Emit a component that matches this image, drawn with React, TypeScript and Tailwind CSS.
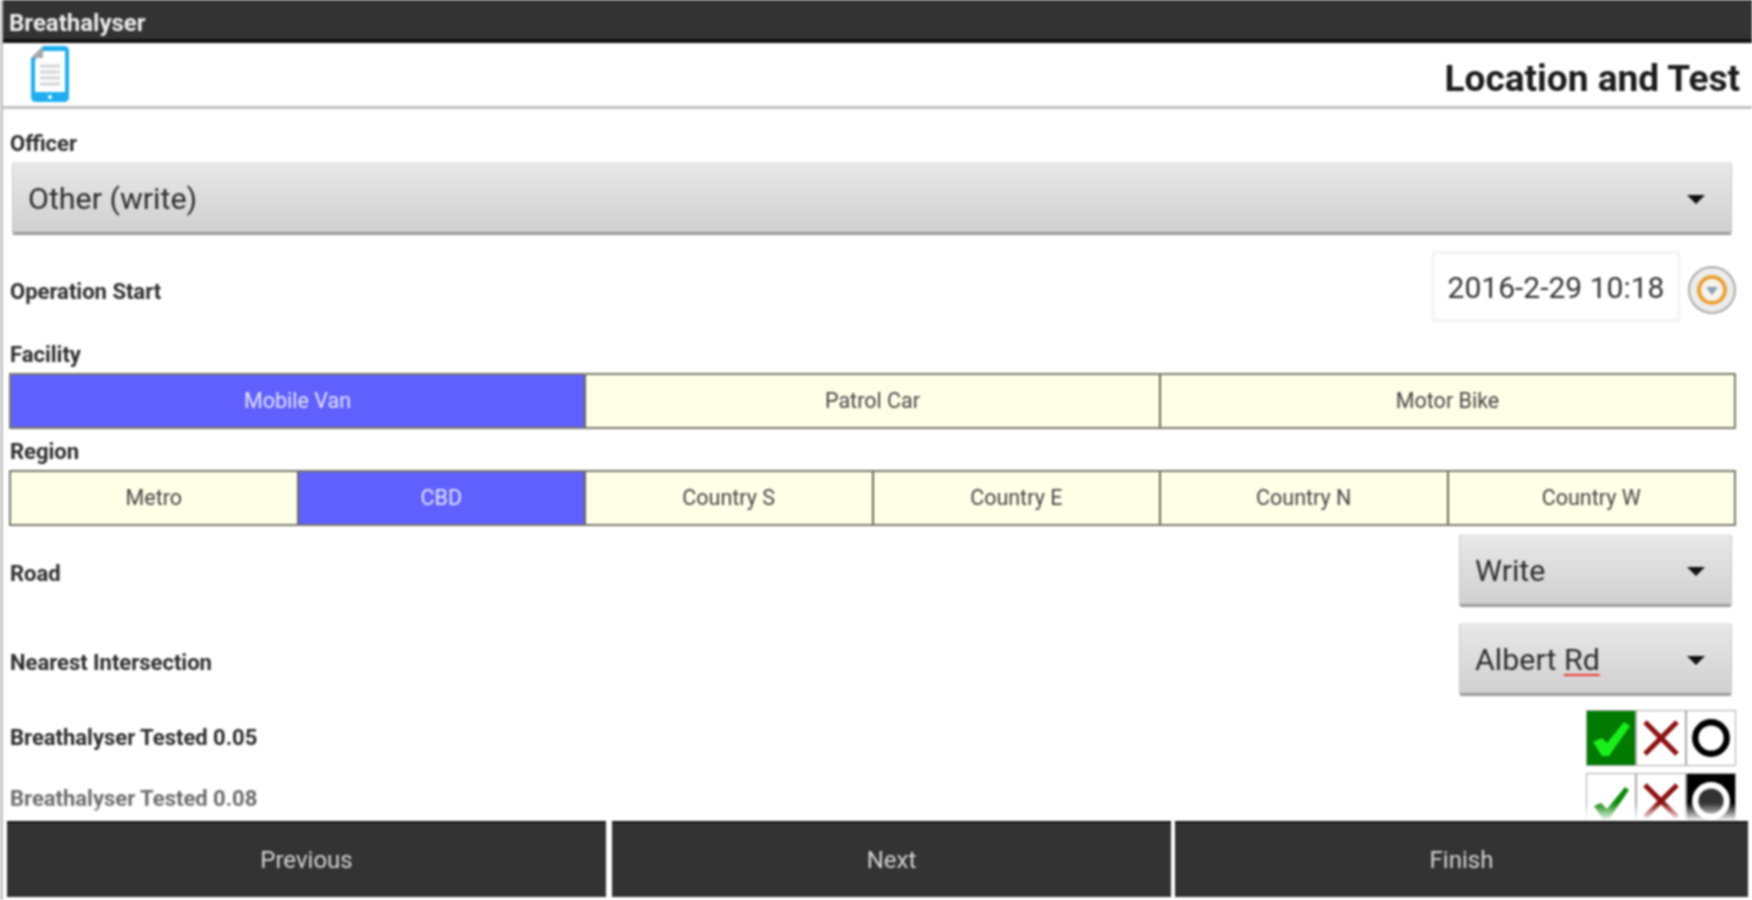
import { ReactNode } from "react"

const font = { fontFamily: "Roboto, sans-serif" }

function Caret() {
    return <div className="w-0 h-0 border-x-[9px] border-x-transparent border-t-[9px] border-t-[#111]" />
}

function Spinner({ children, className }: { children: ReactNode; className: string }) {
    return (
        <div className={`flex items-center justify-between h-[73px] pt-[4px] pl-[15px] pr-[26px] rounded-[3px] bg-gradient-to-b from-[#e9e9e9] to-[#d0d0d0] border-b-[3px] border-b-[#9c9c9c] border-x border-x-[#c8c8c8] text-[30.4px] text-[#2c2c2c] ${className}`}>
            <span>{children}</span>
            <Caret />
        </div>
    )
}

function Label({ children, className = "" }: { children: ReactNode; className?: string }) {
    return <div className={`text-[22px] leading-none font-bold text-[#2c2c2c] ${className}`}>{children}</div>
}

function Segments({ items, active }: { items: string[]; active: number }) {
    return (
        <div className="flex h-[56px] ml-[6px] mr-[16px] border-2 border-[#77776a] bg-[#ffffe8]">
            {items.map((item, i) => (
                <div
                    key={item}
                    className={`flex-1 flex items-center justify-center text-[21.5px] ${i > 0 ? "border-l-2 border-l-[#66665a]" : ""} ${i === active ? "bg-[#6060ff] text-[#e4e4ff]" : "text-[#444]"}`}
                >
                    {item}
                </div>
            ))}
        </div>
    )
}

function Toggle({ selected, kind }: { selected?: string; kind: string }) {
    const on = selected === kind
    const bg = on ? (kind === "check" ? "bg-[#007a00]" : "bg-black") : "bg-white"
    return (
        <div className={`w-[50px] h-[56px] flex items-center justify-center border border-[#aaa] ${bg}`}>
            {kind === "check" && (
                <svg viewBox="0 0 40 40" className="w-[40px] h-[40px]">
                    {on ? (
                        <path d="M2 24 L11 20 L16 25 L33 4 L39 8 L18 38 L11 38 Z" fill="#19f019" />
                    ) : (
                        <path d="M3 25 L10 22 L16 28 L34 6 L38 9 L18 38 L12 38 Z" fill="#0c8a0c" />
                    )}
                </svg>
            )}
            {kind === "x" && (
                <svg viewBox="0 0 40 40" className="w-[40px] h-[40px]">
                    <path d="M4 4 L36 36 M36 4 L4 36" stroke="#8c1010" strokeWidth="5" fill="none" />
                </svg>
            )}
            {kind === "o" && (
                <svg viewBox="0 0 40 40" className="w-[42px] h-[42px]">
                    <circle cx="20" cy="20" r="15" fill={on ? "#333" : "none"} stroke={on ? "#fff" : "#000"} strokeWidth="6" />
                </svg>
            )}
        </div>
    )
}

function DocIcon() {
    return (
        <svg viewBox="0 0 38 58" className="w-[38px] h-[58px] -mt-[9px]">
            <path d="M12 1 H33 Q38 1 38 6 V52 Q38 57 33 57 H5 Q0 57 0 52 V13 Z" fill="#1eaef0" />
            <path d="M13 6 H34 V47 H4 V15 Z" fill="#fff" />
            <path d="M12 1 V13 H0 Z" fill="#a8a8a8" />
            <path d="M9 21 H29 M9 27 H29 M9 33 H29 M9 39 H29" stroke="#d4d4d4" strokeWidth="3" />
            <circle cx="19" cy="52" r="2" fill="#fff" />
        </svg>
    )
}

function ClockIcon() {
    return (
        <svg viewBox="0 0 48 48" className="w-[48px] h-[48px] mt-[6px]">
            <circle cx="24" cy="24" r="23" fill="#ececec" stroke="#a9a9a9" strokeWidth="2" />
            <circle cx="24" cy="24" r="13" fill="#f4f4ee" stroke="#e8a236" strokeWidth="4" />
            <path d="M18 21 L30 21 L24 29 Z" fill="#8b9bb8" />
        </svg>
    )
}

export default function App() {
    return (
        <div className="w-[1752px] h-[900px] flex flex-col overflow-hidden bg-white border-l-[3px] border-l-[#c4c4c4] blur-[0.9px]" style={font}>
            <div className="h-[43px] shrink-0 bg-[#333] border-b-[4px] border-b-[#111] pl-[6px] pt-[6px] flex items-center text-[24px] font-bold text-[#eee]">
                Breathalyser
            </div>
            <div className="h-[66px] shrink-0 flex items-center justify-between pl-[28px] pr-[12px] pt-[8px] border-b-[3px] border-b-[#c0c0c0]">
                <DocIcon />
                <div className="text-[37px] font-bold text-[#1c1c1c]">Location and Test</div>
            </div>

            <div className="relative flex-1 overflow-hidden">
                <Label className="ml-[7px] mt-[24px]">Officer</Label>
                <Spinner className="mt-[7px] ml-[9px] mr-[20px]">Other (write)</Spinner>

                <div className="flex items-center justify-between ml-[7px] mr-[16px] mt-[16px] h-[71px]">
                    <Label className="mt-[10px]">Operation Start</Label>
                    <div className="flex items-center gap-[8px]">
                        <div className="w-[248px] h-[71px] pt-[2px] flex items-center justify-center border-[3px] border-[#f3f3f3] text-[30px] text-[#333]">
                            2016-2-29 10:18
                        </div>
                        <ClockIcon />
                    </div>
                </div>

                <Label className="ml-[7px] mt-[22px] mb-[7px]">Facility</Label>
                <Segments items={["Mobile Van", "Patrol Car", "Motor Bike"]} active={0} />

                <Label className="ml-[7px] mt-[12px] mb-[7px]">Region</Label>
                <Segments items={["Metro", "CBD", "Country S", "Country E", "Country N", "Country W"]} active={1} />

                <div className="flex items-center justify-between ml-[7px] mr-[20px] mt-[8px]">
                    <Label className="mt-[6px]">Road</Label>
                    <Spinner className="w-[273px]">Write</Spinner>
                </div>
                <div className="flex items-center justify-between ml-[7px] mr-[20px] mt-[16px]">
                    <Label className="mt-[6px]">Nearest Intersection</Label>
                    <Spinner className="w-[273px]">
                        Albert <span className="underline decoration-[#e33] decoration-2 underline-offset-4">Rd</span>
                    </Spinner>
                </div>

                <div className="flex items-center justify-between ml-[7px] mr-[16px] mt-[14px]">
                    <Label>Breathalyser Tested 0.05</Label>
                    <div className="flex">
                        <Toggle selected="check" kind="check" />
                        <Toggle selected="check" kind="x" />
                        <Toggle selected="check" kind="o" />
                    </div>
                </div>
                <div className="flex items-center justify-between ml-[7px] mr-[16px] mt-[7px]">
                    <Label className="opacity-70 -mt-[4px]">Breathalyser Tested 0.08</Label>
                    <div className="flex">
                        <Toggle selected="o" kind="check" />
                        <Toggle selected="o" kind="x" />
                        <Toggle selected="o" kind="o" />
                    </div>
                </div>

                <div className="absolute left-0 right-0 bottom-0 h-[18px] bg-gradient-to-b from-transparent to-white" />
            </div>

            <div className="flex shrink-0 h-[76px] mb-[3px] pl-[4px] pr-[4px] gap-[4px] bg-white text-[24px] text-[#d4d4d4]">
                <div className="w-[599px] mr-[2px] flex items-center justify-center bg-[#333] border-t-2 border-t-[#111]">Previous</div>
                <div className="w-[559px] flex items-center justify-center bg-[#333] border-t-2 border-t-[#111]">Next</div>
                <div className="flex-1 flex items-center justify-center bg-[#333] border-t-2 border-t-[#111]">Finish</div>
            </div>
        </div>
    )
}
